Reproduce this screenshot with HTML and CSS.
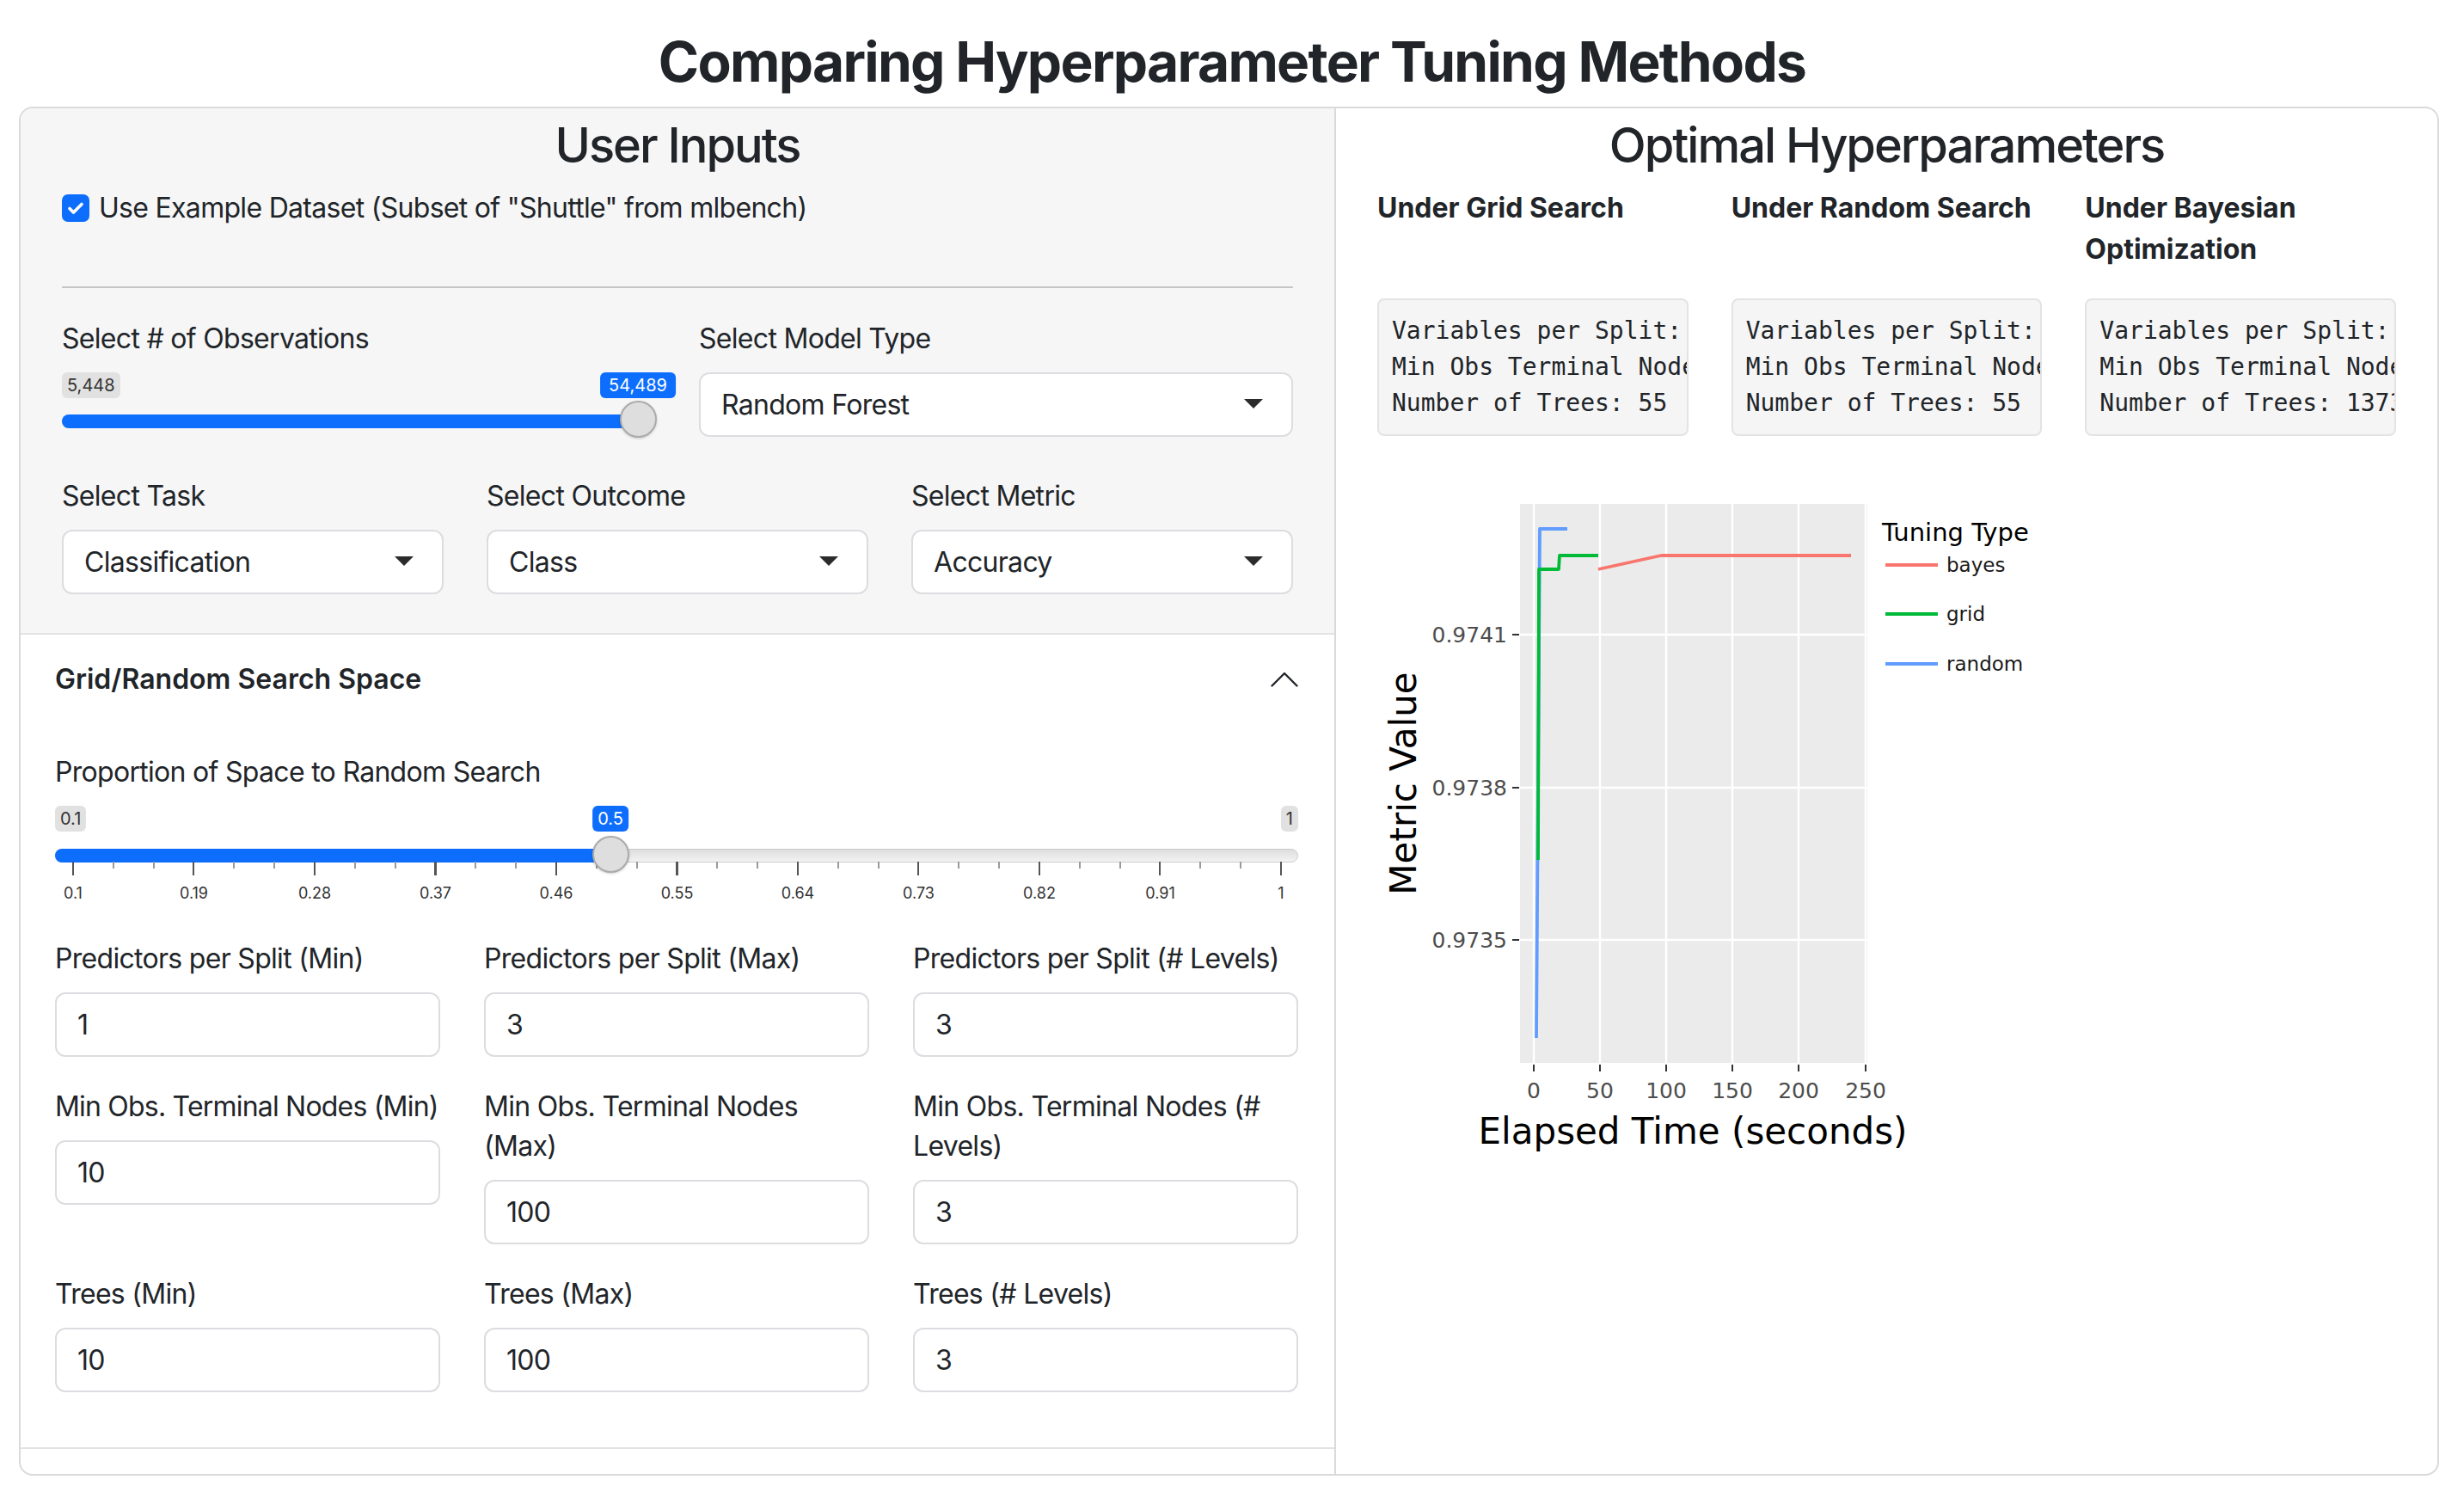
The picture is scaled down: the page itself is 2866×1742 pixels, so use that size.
FILE: index.html
```html
<!DOCTYPE html>
<html lang="en">
<head>
<meta charset="utf-8">
<title>Comparing Hyperparameter Tuning Methods</title>
<link rel="stylesheet" href="styles.css">
</head>
<body>
<h1 class="page-title">Comparing Hyperparameter Tuning Methods</h1>
<div class="layout">
  <div class="inputs-panel">
    <div class="inputs-top">
      <h2 class="panel-title">User Inputs</h2>
      <label class="check-row">
        <span class="check-box"><svg viewBox="0 0 32 32" width="32" height="32"><path d="M9 16.5l4.5 4.5L23 11.5" fill="none" stroke="#fff" stroke-width="3.6" stroke-linecap="round" stroke-linejoin="round"/></svg></span>
        <span>Use Example Dataset (Subset of "Shuttle" from mlbench)</span>
      </label>
      <hr class="divider">
      <div class="field-row cols-2">
        <div class="field">
          <div class="field-label">Select # of Observations</div>
          <div class="range range-obs">
            <span class="range-tag range-tag-min">5,448</span>
            <div class="range-line"></div>
            <div class="range-bar" style="width: 670px"></div>
            <span class="range-tag range-tag-value" style="left: 670px">54,489</span>
            <div class="range-handle" style="left: 670px"></div>
          </div>
        </div>
        <div class="field">
          <div class="field-label">Select Model Type</div>
          <div class="select"><span>Random Forest</span><span class="select-caret"></span></div>
        </div>
      </div>
      <div class="field-row cols-3">
        <div class="field">
          <div class="field-label">Select Task</div>
          <div class="select"><span>Classification</span><span class="select-caret"></span></div>
        </div>
        <div class="field">
          <div class="field-label">Select Outcome</div>
          <div class="select"><span>Class</span><span class="select-caret"></span></div>
        </div>
        <div class="field">
          <div class="field-label">Select Metric</div>
          <div class="select"><span>Accuracy</span><span class="select-caret"></span></div>
        </div>
      </div>
    </div>

    <div class="accordion">
      <div class="acc-header">
        <span>Grid/Random Search Space</span>
        <svg class="acc-chevron" viewBox="0 0 32 18" width="32" height="18"><polyline points="1.5,16.5 16,2 30.5,16.5" fill="none" stroke="#212529" stroke-width="2.4" stroke-linecap="round" stroke-linejoin="round"/></svg>
      </div>
      <div class="acc-body">
        <div class="field-label">Proportion of Space to Random Search</div>
        <div class="range range-prop">
          <span class="range-tag range-tag-min">0.1</span>
          <span class="range-tag range-tag-max">1</span>
          <div class="range-line"></div>
          <div class="range-bar" style="width: 646px"></div>
          <div class="range-ticks range-ticks-minor"></div>
          <div class="range-ticks range-ticks-major"></div>
          <div class="range-grid-labels">
            <span>0.1</span><span>0.19</span><span>0.28</span><span>0.37</span><span>0.46</span><span>0.55</span><span>0.64</span><span>0.73</span><span>0.82</span><span>0.91</span><span>1</span>
          </div>
          <span class="range-tag range-tag-value" style="left: 646px">0.5</span>
          <div class="range-handle" style="left: 646px"></div>
        </div>

        <div class="input-grid">
          <div class="field">
            <div class="field-label">Predictors per Split (Min)</div>
            <input class="num-input" type="text" value="1">
          </div>
          <div class="field">
            <div class="field-label">Predictors per Split (Max)</div>
            <input class="num-input" type="text" value="3">
          </div>
          <div class="field">
            <div class="field-label">Predictors per Split (# Levels)</div>
            <input class="num-input" type="text" value="3">
          </div>
          <div class="field">
            <div class="field-label field-label-nowrap">Min Obs. Terminal Nodes (Min)</div>
            <input class="num-input" type="text" value="10">
          </div>
          <div class="field">
            <div class="field-label">Min Obs. Terminal Nodes (Max)</div>
            <input class="num-input" type="text" value="100">
          </div>
          <div class="field">
            <div class="field-label">Min Obs. Terminal Nodes (# Levels)</div>
            <input class="num-input" type="text" value="3">
          </div>
          <div class="field">
            <div class="field-label">Trees (Min)</div>
            <input class="num-input" type="text" value="10">
          </div>
          <div class="field">
            <div class="field-label">Trees (Max)</div>
            <input class="num-input" type="text" value="100">
          </div>
          <div class="field">
            <div class="field-label">Trees (# Levels)</div>
            <input class="num-input" type="text" value="3">
          </div>
        </div>
      </div>
    </div>
  </div>

  <div class="results-panel">
    <h2 class="panel-title">Optimal Hyperparameters</h2>
    <div class="opt-grid">
      <div class="opt-heading">Under Grid Search</div>
      <div class="opt-heading">Under Random Search</div>
      <div class="opt-heading">Under Bayesian Optimization</div>
      <pre class="opt-box">Variables per Split: 3
Min Obs Terminal Nodes: 55
Number of Trees: 55</pre>
      <pre class="opt-box">Variables per Split: 3
Min Obs Terminal Nodes: 55
Number of Trees: 55</pre>
      <pre class="opt-box">Variables per Split: 3
Min Obs Terminal Nodes: 10
Number of Trees: 1373</pre>
    </div>

    <svg class="chart" width="900" height="800" viewBox="0 0 900 800">
      <rect x="168" y="26" width="404" height="650" fill="#ebebeb"/>
      <g stroke="#ffffff" stroke-width="2.4">
        <line x1="168" x2="572" y1="178" y2="178"/>
        <line x1="168" x2="572" y1="356" y2="356"/>
        <line x1="168" x2="572" y1="533" y2="533"/>
        <line x1="184" x2="184" y1="26" y2="676"/>
        <line x1="261" x2="261" y1="26" y2="676"/>
        <line x1="338" x2="338" y1="26" y2="676"/>
        <line x1="415" x2="415" y1="26" y2="676"/>
        <line x1="492" x2="492" y1="26" y2="676"/>
        <line x1="570" x2="570" y1="26" y2="676"/>
      </g>
      <g stroke="#333333" stroke-width="2">
        <line x1="159" x2="167" y1="178" y2="178"/>
        <line x1="159" x2="167" y1="356" y2="356"/>
        <line x1="159" x2="167" y1="533" y2="533"/>
        <line x1="184" x2="184" y1="678" y2="686"/>
        <line x1="261" x2="261" y1="678" y2="686"/>
        <line x1="338" x2="338" y1="678" y2="686"/>
        <line x1="415" x2="415" y1="678" y2="686"/>
        <line x1="492" x2="492" y1="678" y2="686"/>
        <line x1="570" x2="570" y1="678" y2="686"/>
      </g>
      <g class="chart-tick" text-anchor="end">
        <text x="153" y="187">0.9741</text>
        <text x="153" y="365">0.9738</text>
        <text x="153" y="542">0.9735</text>
      </g>
      <g class="chart-tick" text-anchor="middle">
        <text x="184" y="717">0</text>
        <text x="261" y="717">50</text>
        <text x="338" y="717">100</text>
        <text x="415" y="717">150</text>
        <text x="492" y="717">200</text>
        <text x="570" y="717">250</text>
      </g>
      <g fill="none" stroke-width="3.8" stroke-linejoin="round">
        <polyline stroke="#619CFF" points="187,647 191,55 223,55"/>
        <polyline stroke="#00BA38" points="189,440 190,102 213,102 214,86 259,86"/>
        <polyline stroke="#F8766D" points="259,102 332,86 553,86"/>
      </g>
      <text class="chart-axis-title" x="369" y="770" text-anchor="middle">Elapsed Time (seconds)</text>
      <text class="chart-axis-title" x="47" y="351" text-anchor="middle" transform="rotate(-90 47 351)">Metric Value</text>
      <text class="chart-legend-title" x="589" y="69">Tuning Type</text>
      <g stroke-width="3.8">
        <line x1="593" x2="654" y1="97" y2="97" stroke="#F8766D"/>
        <line x1="593" x2="654" y1="154" y2="154" stroke="#00BA38"/>
        <line x1="593" x2="654" y1="212" y2="212" stroke="#619CFF"/>
      </g>
      <g class="chart-legend-text">
        <text x="664" y="105">bayes</text>
        <text x="664" y="162">grid</text>
        <text x="664" y="220">random</text>
      </g>
    </svg>
  </div>
</div>
</body>
</html>
```

FILE: styles.css
```css
* {
  box-sizing: border-box;
}

html,
body {
  margin: 0;
  padding: 0;
  background: #ffffff;
}

body {
  font-family: Inter, "Noto Sans", "Liberation Sans", sans-serif;
  font-size: 32px;
  line-height: 48px;
  letter-spacing: -0.7px;
  color: #212529;
}

.page-title {
  margin: 33px 0 14px;
  font-size: 64px;
  line-height: 77px;
  font-weight: 700;
  letter-spacing: -1.7px;
  text-align: center;
}

.layout {
  margin-left: 22px;
  width: 2815px;
  border: 2px solid #dadada;
  border-radius: 16px;
  display: grid;
  grid-template-columns: 1528px 1fr;
  overflow: hidden;
}

.inputs-panel {
  display: flex;
  flex-direction: column;
  padding-bottom: 29px;
}

.inputs-top {
  background: #f6f6f6;
  padding: 10px 48px 45px;
  border-bottom: 2px solid #e2e2e2;
}

.panel-title {
  margin: 0 0 15px;
  font-size: 56px;
  line-height: 67px;
  font-weight: 500;
  letter-spacing: -2px;
  text-align: center;
}

.check-row {
  display: flex;
  align-items: center;
  gap: 11px;
  height: 48px;
}

.check-box {
  width: 32px;
  height: 32px;
  border-radius: 7px;
  background: #0d6efd;
  display: flex;
}

.divider {
  margin: 67px 0 36px;
  border: 0;
  border-top: 2px solid #c6c6c6;
}

.field-row {
  display: grid;
  column-gap: 50px;
}

.cols-2 {
  grid-template-columns: 1fr 1fr;
  margin-bottom: 46px;
}

.cols-3 {
  grid-template-columns: 1fr 1fr 1fr;
}

.field-label {
  line-height: 46px;
  margin-bottom: 16px;
}

.field-label-nowrap {
  white-space: nowrap;
  letter-spacing: -0.8px;
}

.select {
  height: 75px;
  border: 2px solid #dcdde0;
  border-radius: 12px;
  background: #ffffff;
  padding: 0 24px;
  display: flex;
  align-items: center;
  justify-content: space-between;
}

.select-caret {
  width: 0;
  height: 0;
  border-left: 11px solid transparent;
  border-right: 11px solid transparent;
  border-top: 11px solid #2b2b2b;
  margin-right: 9px;
  margin-top: -2px;
}

/* range slider */
.range {
  position: relative;
  letter-spacing: 0;
}

.range-obs {
  height: 75px;
}

.range-prop {
  height: 120px;
  margin-bottom: 35px;
}

.range-tag {
  position: absolute;
  top: 0;
  height: 30px;
  line-height: 30px;
  padding: 0 6px;
  font-size: 20px;
  border-radius: 6px;
  background: #e1e1e1;
  color: #333333;
  white-space: nowrap;
}

.range-tag-min {
  left: 0;
}

.range-tag-max {
  right: 0;
}

.range-tag-value {
  background: #0d6efd;
  color: #ffffff;
  transform: translateX(-50%);
  z-index: 2;
}

.range-obs .range-tag-value {
  padding: 0 10px;
}

.range-line {
  position: absolute;
  left: 0;
  right: 0;
  top: 49px;
  height: 16px;
  border-radius: 8px;
  background: linear-gradient(#dedede, #f3f3f3);
  border: 1px solid #cccccc;
}

.range-bar {
  position: absolute;
  left: 0;
  top: 49px;
  height: 16px;
  border-radius: 8px 0 0 8px;
  background: #0d6efd;
}

.range-handle {
  position: absolute;
  top: 33px;
  width: 43px;
  height: 43px;
  margin-left: -21.5px;
  border-radius: 50%;
  background: #dedede;
  border: 2px solid #ababab;
  box-shadow: 0 1px 3px rgba(0, 0, 0, 0.2);
  z-index: 3;
}

.range-prop .range-handle {
  top: 35px;
}

.range-prop .range-line,
.range-prop .range-bar {
  top: 50px;
}

.range-ticks {
  position: absolute;
  left: 20px;
  width: 1408px;
  top: 65px;
}

.range-ticks-major {
  height: 16px;
  background: repeating-linear-gradient(to right, #555555 0 2px, transparent 2px 140.5px);
}

.range-ticks-minor {
  height: 8px;
  background: repeating-linear-gradient(to right, #9a9a9a 0 2px, transparent 2px 46.8333px);
}

.range-grid-labels {
  position: absolute;
  left: -49.25px;
  top: 91px;
  display: flex;
  font-size: 18px;
  line-height: 22px;
  color: #333333;
}

.range-grid-labels span {
  width: 140.5px;
  text-align: center;
}

/* accordion */
.accordion {
  border-bottom: 2px solid #e2e2e2;
}

.acc-header {
  display: flex;
  align-items: center;
  justify-content: space-between;
  padding: 28px 42px 28px 40px;
  font-weight: 600;
  line-height: 48px;
  letter-spacing: 0;
}

.acc-body {
  padding: 33px 42px 64px 40px;
}

.input-grid {
  display: grid;
  grid-template-columns: 1fr 1fr 1fr;
  column-gap: 51px;
  row-gap: 35px;
  align-items: start;
}

.num-input {
  display: block;
  width: 100%;
  height: 75px;
  border: 2px solid #dcdde0;
  border-radius: 12px;
  background: #ffffff;
  padding: 0 24px;
  font: inherit;
  letter-spacing: inherit;
  color: #212529;
  outline: none;
}

/* results */
.results-panel {
  border-left: 2px solid #dadada;
  padding: 10px 48px 0;
}

.opt-grid {
  display: grid;
  grid-template-columns: 1fr 1fr 1fr;
  column-gap: 50px;
  row-gap: 33px;
}

.opt-heading {
  font-weight: 700;
  line-height: 48px;
  letter-spacing: 0;
}

.opt-box {
  margin: 0;
  height: 160px;
  border: 2px solid #e3e3e3;
  border-radius: 8px;
  background: #f5f5f5;
  padding: 15px;
  font-family: "DejaVu Sans Mono", "Liberation Mono", monospace;
  font-size: 28px;
  line-height: 42px;
  letter-spacing: 0;
  color: #212529;
  white-space: pre;
  overflow: hidden;
}

.chart {
  display: block;
  margin: 53px 0 0 -2px;
  font-family: "DejaVu Sans", sans-serif;
  letter-spacing: 0;
}

.chart-tick {
  font-size: 25px;
  fill: #4d4d4d;
}

.chart-axis-title {
  font-size: 42px;
  fill: #000000;
}

.chart-legend-title {
  font-size: 29px;
  fill: #000000;
}

.chart-legend-text {
  font-size: 23px;
  fill: #1a1a1a;
}
```
